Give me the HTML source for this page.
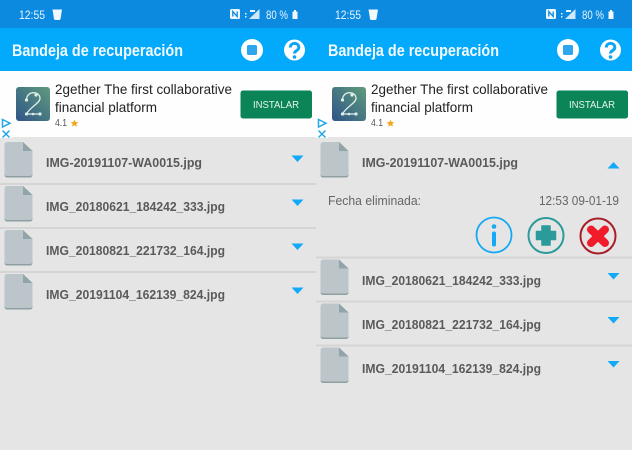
<!DOCTYPE html>
<html>
<head>
<meta charset="utf-8">
<style>
html,body{margin:0;padding:0;width:632px;height:450px;overflow:hidden;background:#e5e5e5}
svg{display:block;filter:blur(0.3px)}
text{font-family:"Liberation Sans",sans-serif}
.st{fill:#eaf5fd;font-size:11.5px}
.ti{fill:#f2faff;font-size:17px;font-weight:bold}
.ad{fill:#222;font-size:14px}
.ra{fill:#555;font-size:10.500px}
.be{fill:#e3f3ec;font-size:10.500px}
.fn{fill:#5a5a5a;font-size:13px;font-weight:bold}
.de{fill:#666;font-size:13px}
</style>
</head>
<body>
<svg width="632" height="450" viewBox="0 0 632 450" xmlns="http://www.w3.org/2000/svg">
<defs>
<linearGradient id="g" x1="1" y1="0" x2="0" y2="1">
<stop offset="0" stop-color="#5f9c7c"/><stop offset="1" stop-color="#2f5488"/>
</linearGradient>
<g id="file">
<path d="M3 0H18.500L28 9V32.500Q28 35.500 25 35.500H3Q0 35.500 0 32.500V3Q0 0 3 0Z" fill="#bcc5c9"/>
<path d="M0 32V32.500Q0 35.500 3 35.500H25Q28 35.500 28 32.500V32Q28 34 25 34H3Q0 34 0 32Z" fill="#8fa0a3"/>
<path d="M18.500 0L28 9H18.500Z" fill="#8fa5a8"/>
</g>
<path id="dn" d="M0 0H12L6 6.500Z" fill="#12a9f6"/>
<path id="up" d="M0 6.500H12L6 0Z" fill="#12a9f6"/>
<g id="chrome">
<rect x="0" y="0" width="316" height="28" fill="#0b8ae0"/>
<rect x="0" y="28" width="316" height="43" fill="#03a9fb"/>
<rect x="0" y="71" width="316" height="66" fill="#fefefe"/>
<path d="M52.500 9.500H62L60.500 19Q60.300 20 59 20H55.500Q54.200 20 54 19Z" fill="#f2f8fd"/>
<rect x="230" y="9" width="10" height="10" rx="1.500" fill="#eef7fd"/>
<path d="M232.800 16.500V11.500L237.200 16.500V11.500" fill="none" stroke="#0b8ae0" stroke-width="1.300"/>
<path d="M245 13h1.500v1.500H245zM245 16h1.500v1.500H245z" fill="#eaf5fd"/>
<path d="M259.500 9V19H249Z" fill="#cfe8fa"/>
<path d="M250 10h5v2h-5z" fill="#eaf5fd"/>
<rect x="292.500" y="11.500" width="5" height="7.500" fill="#f2f8fd"/>
<rect x="294" y="10" width="2" height="1.500" fill="#f2f8fd"/>
<circle cx="252" cy="50" r="11" fill="#fff"/>
<rect x="247" y="45" width="10" height="10" rx="1.500" fill="#2ea6ee"/>
<circle cx="294.500" cy="50" r="10.500" fill="#fff"/>
<path d="M290.300 47.500C290.300 42 298.800 42 298.800 47.500C298.800 50.800 294.500 50.300 294.500 53.500" fill="none" stroke="#0ba7f6" stroke-width="3"/>
<circle cx="294.500" cy="57" r="1.800" fill="#0ba7f6"/>
<rect x="16" y="87" width="34" height="34" rx="3" fill="url(#g)"/>
<path d="M26.500 100C26.500 90.500 40 90.500 40 98.500C40 103 30 107 26.500 114H40" fill="none" stroke="#dfeee8" stroke-width="1.300"/>
<circle cx="26.500" cy="100" r="1.600" fill="#dfeee8"/><circle cx="36" cy="95" r="1.600" fill="#dfeee8"/>
<circle cx="26.500" cy="114" r="1.600" fill="#dfeee8"/><circle cx="40" cy="114" r="1.600" fill="#dfeee8"/><circle cx="33" cy="114" r="1.300" fill="#dfeee8"/>
<path d="M74.500 119.500l1.100 2.500 2.700.2-2 1.800.6 2.600-2.400-1.400-2.400 1.400.6-2.600-2-1.800 2.700-.2Z" fill="#f2a81d"/>
<rect x="240.500" y="90.500" width="71.500" height="28" rx="2.500" fill="#0b8458"/>
<rect x="0" y="117" width="12" height="21" fill="#fff"/>
<path d="M2.500 119.500V127L10 123.200Z" fill="none" stroke="#27a8e6" stroke-width="1.500"/>
<path d="M2.500 130.500L9.500 137.500M9.500 130.500L2.500 137.500" stroke="#27a8e6" stroke-width="1.500"/>
</g>
</defs>

<rect width="632" height="450" fill="#e5e5e5"/>

<!-- LEFT -->
<use href="#chrome"/>
<text class="st" x="19" y="19" textLength="26" lengthAdjust="spacingAndGlyphs">12:55</text>
<text class="st" x="266" y="19" textLength="22" lengthAdjust="spacingAndGlyphs">80 %</text>
<text class="ti" x="12" y="56" textLength="171" lengthAdjust="spacingAndGlyphs">Bandeja de recuperación</text>
<text class="ad" x="55" y="94" textLength="177" lengthAdjust="spacingAndGlyphs">2gether The first collaborative</text>
<text class="ad" x="55" y="112" textLength="102" lengthAdjust="spacingAndGlyphs">financial platform</text>
<text class="ra" x="55" y="126" textLength="12" lengthAdjust="spacingAndGlyphs">4.1</text>
<text class="be" x="253" y="108" textLength="46" lengthAdjust="spacingAndGlyphs">INSTALAR</text>

<rect x="0" y="183" width="316" height="2" fill="#d5d5d5"/>
<rect x="0" y="227" width="316" height="2" fill="#d5d5d5"/>
<rect x="0" y="271" width="316" height="2" fill="#d5d5d5"/>
<use href="#file" x="4.500" y="142"/>
<use href="#file" x="4.500" y="186"/>
<use href="#file" x="4.500" y="230"/>
<use href="#file" x="4.500" y="274"/>
<text class="fn" x="46" y="167" textLength="156" lengthAdjust="spacingAndGlyphs">IMG-20191107-WA0015.jpg</text>
<text class="fn" x="46" y="211" textLength="179" lengthAdjust="spacingAndGlyphs">IMG_20180621_184242_333.jpg</text>
<text class="fn" x="46" y="255" textLength="179" lengthAdjust="spacingAndGlyphs">IMG_20180821_221732_164.jpg</text>
<text class="fn" x="46" y="299" textLength="179" lengthAdjust="spacingAndGlyphs">IMG_20191104_162139_824.jpg</text>
<use href="#dn" x="291.500" y="155.500"/>
<use href="#dn" x="291.500" y="199.500"/>
<use href="#dn" x="291.500" y="243.500"/>
<use href="#dn" x="291.500" y="287.500"/>

<!-- RIGHT -->
<use href="#chrome" x="316"/>
<text class="st" x="335" y="19" textLength="26" lengthAdjust="spacingAndGlyphs">12:55</text>
<text class="st" x="582" y="19" textLength="22" lengthAdjust="spacingAndGlyphs">80 %</text>
<text class="ti" x="328" y="56" textLength="171" lengthAdjust="spacingAndGlyphs">Bandeja de recuperación</text>
<text class="ad" x="371" y="94" textLength="177" lengthAdjust="spacingAndGlyphs">2gether The first collaborative</text>
<text class="ad" x="371" y="112" textLength="102" lengthAdjust="spacingAndGlyphs">financial platform</text>
<text class="ra" x="371" y="126" textLength="12" lengthAdjust="spacingAndGlyphs">4.1</text>
<text class="be" x="569" y="108" textLength="46" lengthAdjust="spacingAndGlyphs">INSTALAR</text>

<use href="#file" x="320.500" y="142"/>
<text class="fn" x="362" y="167" textLength="156" lengthAdjust="spacingAndGlyphs">IMG-20191107-WA0015.jpg</text>
<use href="#up" x="607.500" y="162"/>
<text class="de" x="328" y="205" textLength="93" lengthAdjust="spacingAndGlyphs">Fecha eliminada:</text>
<text class="de" x="539" y="205" textLength="80" lengthAdjust="spacingAndGlyphs">12:53 09-01-19</text>

<circle cx="494" cy="235" r="17.500" fill="none" stroke="#14a9f4" stroke-width="1.800"/>
<circle cx="494" cy="226.500" r="2.300" fill="#14a9f4"/>
<rect x="492" y="231.500" width="4" height="15" rx="2" fill="#14a9f4"/>

<circle cx="546" cy="235.500" r="17.500" fill="none" stroke="#2a9a9a" stroke-width="2"/>
<path d="M542 226H550V231.500H555.500V239.500H550V245H542V239.500H536.500V231.500H542Z" fill="#2a9a9a" stroke="#2a9a9a" stroke-width="1.500" stroke-linejoin="round"/>

<circle cx="598" cy="236" r="17.500" fill="none" stroke="#a91c26" stroke-width="2"/>
<path d="M591 229.500L605 243M605 229.500L591 243" stroke="#f01c2a" stroke-width="8" stroke-linecap="round"/>

<rect x="316" y="256.500" width="316" height="2" fill="#d5d5d5"/>
<rect x="316" y="300.500" width="316" height="2" fill="#d5d5d5"/>
<rect x="316" y="344.500" width="316" height="2" fill="#d5d5d5"/>
<use href="#file" x="320.500" y="259.500"/>
<use href="#file" x="320.500" y="303.500"/>
<use href="#file" x="320.500" y="347.500"/>
<text class="fn" x="362" y="285" textLength="179" lengthAdjust="spacingAndGlyphs">IMG_20180621_184242_333.jpg</text>
<text class="fn" x="362" y="329" textLength="179" lengthAdjust="spacingAndGlyphs">IMG_20180821_221732_164.jpg</text>
<text class="fn" x="362" y="373" textLength="179" lengthAdjust="spacingAndGlyphs">IMG_20191104_162139_824.jpg</text>
<use href="#dn" x="607.500" y="273"/>
<use href="#dn" x="607.500" y="317"/>
<use href="#dn" x="607.500" y="361"/>
</svg>
</body>
</html>
